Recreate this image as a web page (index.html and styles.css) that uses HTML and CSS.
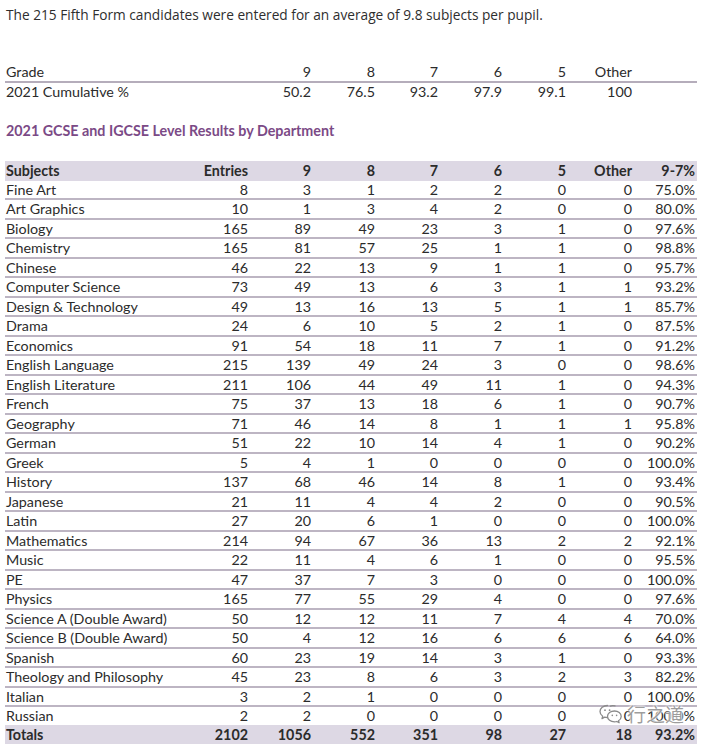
FILE: index.html
```html
<!DOCTYPE html>
<html lang="en">
<head>
<meta charset="utf-8">
<title>2021 GCSE Results</title>
<link rel="stylesheet" href="styles.css">
</head>
<body>
<div class="page">
  <p class="intro">The 215 Fifth Form candidates were entered for an average of 9.8 subjects per pupil.</p>

  <table class="grades">
    <colgroup>
      <col class="c-wide"><col class="c63"><col class="c64"><col class="c63"><col class="c64"><col class="c64"><col class="c66"><col class="c63">
    </colgroup>
    <tbody>
      <tr class="g-head"><td>Grade</td><td>9</td><td>8</td><td>7</td><td>6</td><td>5</td><td>Other</td><td></td></tr>
      <tr><td>2021 Cumulative %</td><td>50.2</td><td>76.5</td><td>93.2</td><td>97.9</td><td>99.1</td><td class="ctr">100</td><td></td></tr>
    </tbody>
  </table>

  <h2 class="dept">2021 GCSE and IGCSE Level Results by Department</h2>

  <div class="results-wrap">
  <table class="results">
    <colgroup>
      <col class="c-first"><col class="c63"><col class="c63"><col class="c64"><col class="c63"><col class="c64"><col class="c64"><col class="c66"><col class="c63">
    </colgroup>
    <thead>
      <tr><th>Subjects</th><th>Entries</th><th>9</th><th>8</th><th>7</th><th>6</th><th>5</th><th>Other</th><th>9-7%</th></tr>
    </thead>
    <tbody>
      <tr><td>Fine Art</td><td>8</td><td>3</td><td>1</td><td>2</td><td>2</td><td>0</td><td>0</td><td>75.0%</td></tr>
      <tr><td>Art Graphics</td><td>10</td><td>1</td><td>3</td><td>4</td><td>2</td><td>0</td><td>0</td><td>80.0%</td></tr>
      <tr><td>Biology</td><td>165</td><td>89</td><td>49</td><td>23</td><td>3</td><td>1</td><td>0</td><td>97.6%</td></tr>
      <tr><td>Chemistry</td><td>165</td><td>81</td><td>57</td><td>25</td><td>1</td><td>1</td><td>0</td><td>98.8%</td></tr>
      <tr><td>Chinese</td><td>46</td><td>22</td><td>13</td><td>9</td><td>1</td><td>1</td><td>0</td><td>95.7%</td></tr>
      <tr><td>Computer Science</td><td>73</td><td>49</td><td>13</td><td>6</td><td>3</td><td>1</td><td>1</td><td>93.2%</td></tr>
      <tr><td>Design &amp; Technology</td><td>49</td><td>13</td><td>16</td><td>13</td><td>5</td><td>1</td><td>1</td><td>85.7%</td></tr>
      <tr><td>Drama</td><td>24</td><td>6</td><td>10</td><td>5</td><td>2</td><td>1</td><td>0</td><td>87.5%</td></tr>
      <tr><td>Economics</td><td>91</td><td>54</td><td>18</td><td>11</td><td>7</td><td>1</td><td>0</td><td>91.2%</td></tr>
      <tr><td>English Language</td><td>215</td><td>139</td><td>49</td><td>24</td><td>3</td><td>0</td><td>0</td><td>98.6%</td></tr>
      <tr><td>English Literature</td><td>211</td><td>106</td><td>44</td><td>49</td><td>11</td><td>1</td><td>0</td><td>94.3%</td></tr>
      <tr><td>French</td><td>75</td><td>37</td><td>13</td><td>18</td><td>6</td><td>1</td><td>0</td><td>90.7%</td></tr>
      <tr><td>Geography</td><td>71</td><td>46</td><td>14</td><td>8</td><td>1</td><td>1</td><td>1</td><td>95.8%</td></tr>
      <tr><td>German</td><td>51</td><td>22</td><td>10</td><td>14</td><td>4</td><td>1</td><td>0</td><td>90.2%</td></tr>
      <tr><td>Greek</td><td>5</td><td>4</td><td>1</td><td>0</td><td>0</td><td>0</td><td>0</td><td>100.0%</td></tr>
      <tr><td>History</td><td>137</td><td>68</td><td>46</td><td>14</td><td>8</td><td>1</td><td>0</td><td>93.4%</td></tr>
      <tr><td>Japanese</td><td>21</td><td>11</td><td>4</td><td>4</td><td>2</td><td>0</td><td>0</td><td>90.5%</td></tr>
      <tr><td>Latin</td><td>27</td><td>20</td><td>6</td><td>1</td><td>0</td><td>0</td><td>0</td><td>100.0%</td></tr>
      <tr><td>Mathematics</td><td>214</td><td>94</td><td>67</td><td>36</td><td>13</td><td>2</td><td>2</td><td>92.1%</td></tr>
      <tr><td>Music</td><td>22</td><td>11</td><td>4</td><td>6</td><td>1</td><td>0</td><td>0</td><td>95.5%</td></tr>
      <tr><td>PE</td><td>47</td><td>37</td><td>7</td><td>3</td><td>0</td><td>0</td><td>0</td><td>100.0%</td></tr>
      <tr><td>Physics</td><td>165</td><td>77</td><td>55</td><td>29</td><td>4</td><td>0</td><td>0</td><td>97.6%</td></tr>
      <tr><td>Science A (Double Award)</td><td>50</td><td>12</td><td>12</td><td>11</td><td>7</td><td>4</td><td>4</td><td>70.0%</td></tr>
      <tr><td>Science B (Double Award)</td><td>50</td><td>4</td><td>12</td><td>16</td><td>6</td><td>6</td><td>6</td><td>64.0%</td></tr>
      <tr><td>Spanish</td><td>60</td><td>23</td><td>19</td><td>14</td><td>3</td><td>1</td><td>0</td><td>93.3%</td></tr>
      <tr><td>Theology and Philosophy</td><td>45</td><td>23</td><td>8</td><td>6</td><td>3</td><td>2</td><td>3</td><td>82.2%</td></tr>
      <tr><td>Italian</td><td>3</td><td>2</td><td>1</td><td>0</td><td>0</td><td>0</td><td>0</td><td>100.0%</td></tr>
      <tr class="last"><td>Russian</td><td>2</td><td>2</td><td>0</td><td>0</td><td>0</td><td>0</td><td>0</td><td>100.0%</td></tr>
    </tbody>
    <tfoot>
      <tr><td>Totals</td><td>2102</td><td>1056</td><td>552</td><td>351</td><td>98</td><td>27</td><td>18</td><td>93.2%</td></tr>
    </tfoot>
  </table>
  <div class="watermark">
    <svg class="wm-icon" width="26" height="22" viewBox="0 0 26 22" aria-hidden="true">
      <path d="M9.5 2.5c-4.2 0-7.5 2.7-7.5 6.1 0 1.9 1 3.6 2.7 4.7l-.7 2.3 2.7-1.4c.9.3 1.8.4 2.8.4" fill="none" stroke="#8a8a8a" stroke-width="1.3" stroke-linecap="round" stroke-linejoin="round"/>
      <path d="M17 2.9c-1.8-.3-3.5-.4-4.6.2" fill="none" stroke="#8a8a8a" stroke-width="1.3" stroke-linecap="round"/>
      <path d="M16.5 8c-3.9 0-7 2.4-7 5.4s3.1 5.4 7 5.4c.8 0 1.6-.1 2.3-.3l2.3 1.2-.6-2c1.6-1 2.7-2.6 2.7-4.3 0-3-3-5.4-6.7-5.4z" fill="none" stroke="#8a8a8a" stroke-width="1.3" stroke-linejoin="round"/>
      <circle cx="7" cy="7.2" r="0.9" fill="#8a8a8a"/>
      <circle cx="11.6" cy="7.2" r="0.9" fill="#8a8a8a"/>
      <circle cx="14.3" cy="12.4" r="0.8" fill="#8a8a8a"/>
      <circle cx="18.6" cy="12.4" r="0.8" fill="#8a8a8a"/>
    </svg>
    <span class="wm-text">行之道</span>
  </div>
  </div>
</div>
</body>
</html>
```

FILE: styles.css
```css
html, body {
  margin: 0;
  padding: 0;
  background: #ffffff;
}

body {
  font-family: Lato, "Noto Sans", "Liberation Sans", sans-serif;
  color: #2b2b2b;
  font-size: 14.3px;
}

.page {
  width: 692px;
  padding: 6px 0 0 5px;
}

.intro {
  margin: 0 0 0 1px;
  font-family: "Open Sans", "Noto Sans", sans-serif;
  font-size: 13.7px;
  line-height: 18px;
  color: #2e2e2e;
}

table {
  border-collapse: collapse;
  table-layout: fixed;
  width: 692px;
}

col.c-wide { width: 245px; }
col.c-first { width: 182px; }
col.c63 { width: 63px; }
col.c64 { width: 64px; }
col.c66 { width: 66px; }

td, th {
  padding: 0 2px 0 0;
  text-align: right;
  white-space: nowrap;
  height: 17.5px;
  line-height: 17.5px;
  font-size: 14.3px;
}

td:first-child, th:first-child {
  text-align: left;
  padding-left: 1px;
}

.grades {
  margin-top: 39px;
}

.grades .g-head td {
  border-bottom: 2px solid #b5adbb;
}

.dept {
  margin: 22px 0 0 1px;
  font-size: 14.3px;
  line-height: 18px;
  font-weight: 700;
  color: #7b4a86;
}

.results-wrap {
  position: relative;
  margin-top: 21px;
}

.results thead th,
.results tfoot td {
  background: #ddd8e4;
  font-weight: 700;
  height: 19.5px;
  line-height: 19.5px;
}

.results tbody tr {
  border-bottom: 2px solid #bdb5c3;
}

.results tbody tr.last {
  border-bottom: 0;
}

.watermark {
  position: absolute;
  left: 593px;
  top: 542px;
  display: flex;
  align-items: center;
  gap: 3px;
  pointer-events: none;
}

.wm-icon {
  display: block;
}

.wm-text {
  font-family: "Noto Sans CJK SC", "Noto Sans CJK TC", sans-serif;
  font-size: 19px;
  line-height: 22px;
  color: rgba(140, 140, 140, 0.85);
  text-shadow: 0 0 2px #ffffff, 0 0 2px #ffffff, 0 0 3px #ffffff;
}
```
